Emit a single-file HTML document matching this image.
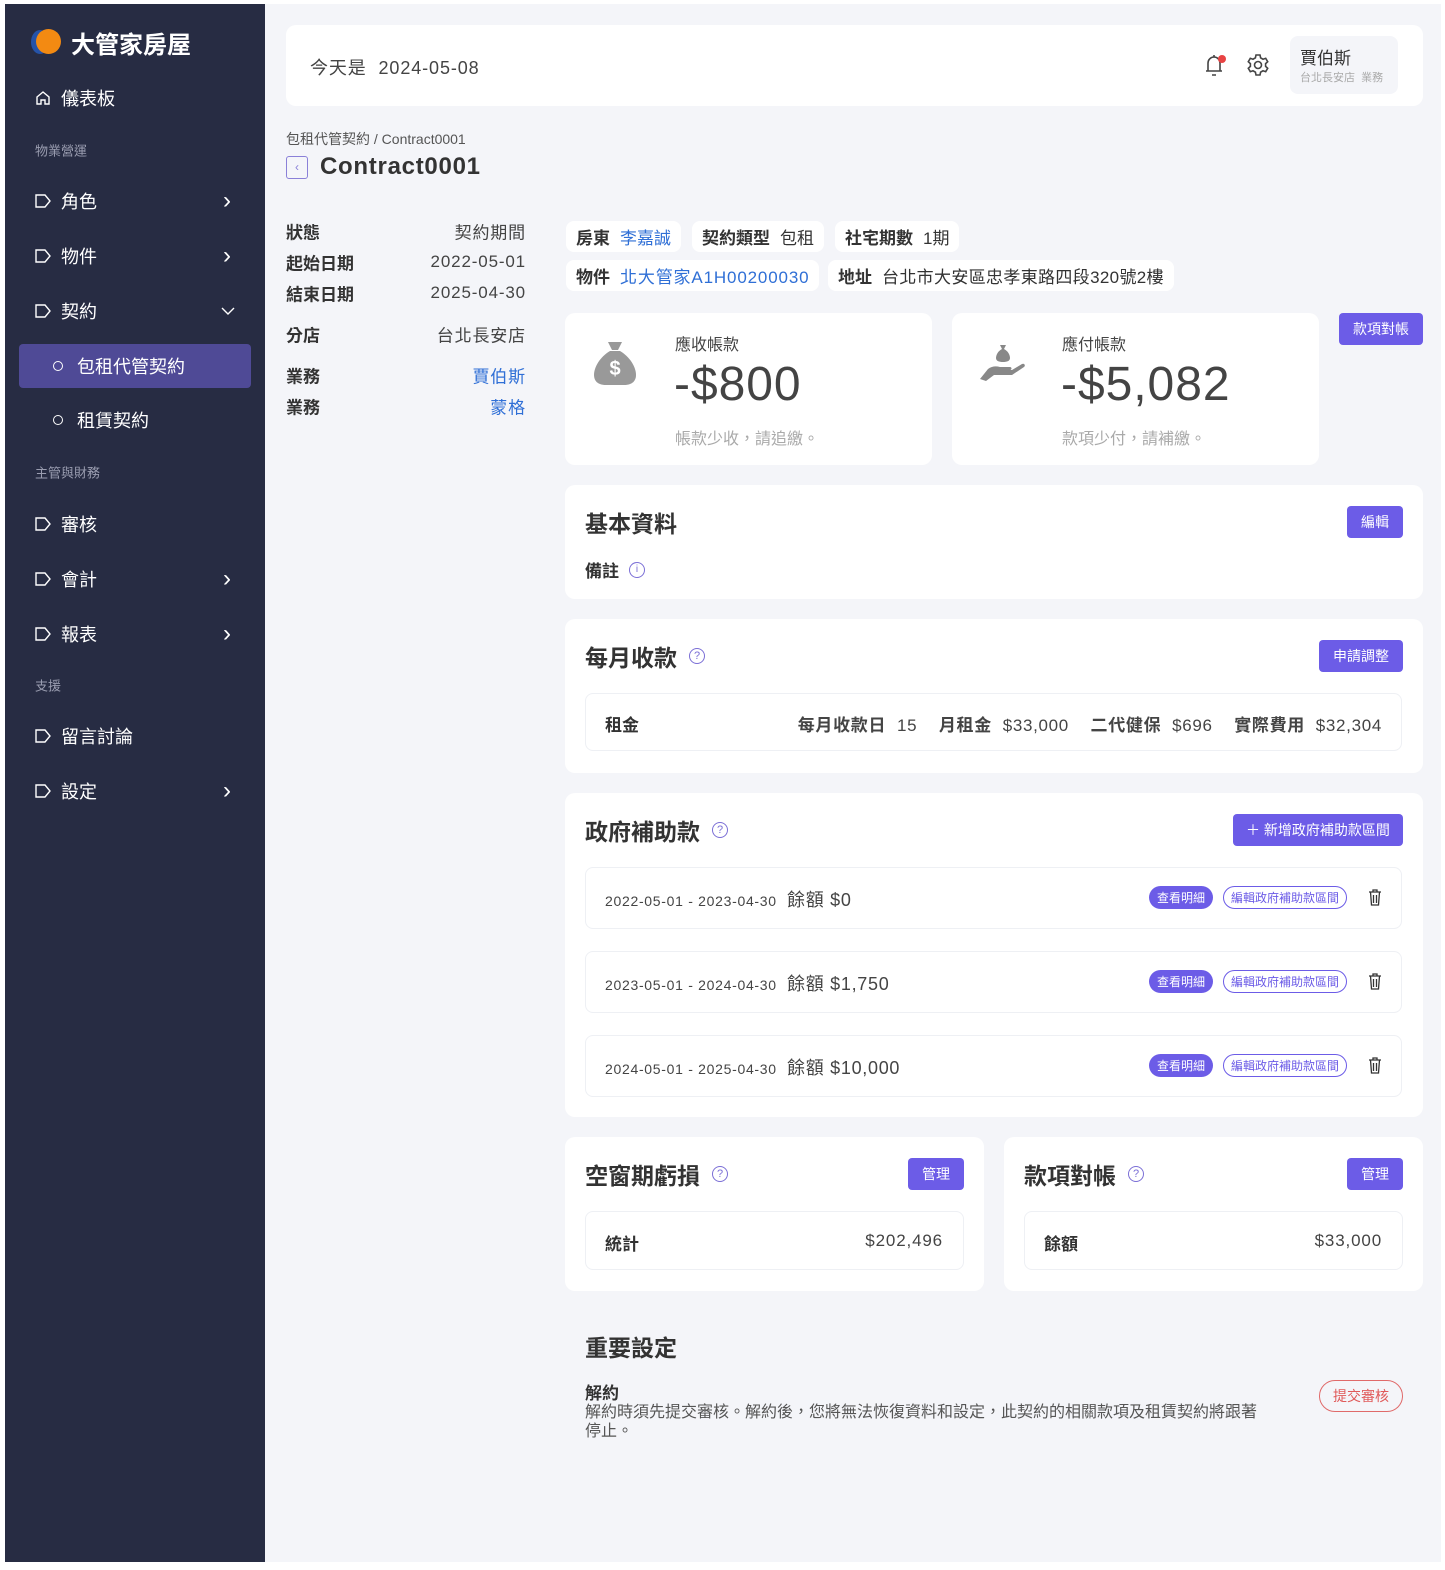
<!DOCTYPE html>
<html><head><meta charset="utf-8"><style>
*{margin:0;padding:0;box-sizing:border-box}
body{width:1445px;height:1570px;background:#fff;font-family:"Liberation Sans","Noto Sans CJK TC",sans-serif;color:#333;position:relative;overflow:hidden}
.a{position:absolute}
.ls{letter-spacing:0.05em}
.main{left:5px;top:4px;width:1436px;height:1558px;background:#f4f5f9}
.side{left:5px;top:4px;width:260px;height:1558px;background:#272c43;color:#fff}
.ni{position:absolute;left:30px;font-size:18px;display:flex;align-items:center;gap:10px;transform:translateY(-50%)}
.sec{position:absolute;left:30px;font-size:13px;color:#9a9db0;transform:translateY(-50%)}
.chev{position:absolute;left:218px;transform:translateY(-50%);font-size:24px;color:#fff}
.card{position:absolute;background:#fff;border-radius:10px}
.lab{position:absolute;left:286px;font-size:17px;font-weight:bold;transform:translateY(-50%)}
.val{position:absolute;right:919px;font-size:17px;color:#444;transform:translateY(-50%);letter-spacing:0.05em}
.chip{position:absolute;background:#fff;border-radius:8px;height:31px;font-size:17px;display:flex;align-items:center;padding:0 10px;gap:10px;white-space:nowrap}
.chip b{color:#333}
.blue{color:#2f6fd6}
.btn{position:absolute;background:#6c5ce7;color:#fff;border-radius:4px;font-size:14px;display:flex;align-items:center;justify-content:center}
.h2{position:absolute;font-size:23px;font-weight:bold;color:#333;display:flex;align-items:center;gap:12px}
.q{width:16px;height:16px;border:1.3px solid #7b6fd6;border-radius:50%;color:#7b6fd6;font-size:11px;display:flex;align-items:center;justify-content:center;font-weight:normal}
.row{position:absolute;left:585px;width:817px;border:1px solid #eef0f4;border-radius:8px;background:#fff}
.pill1{position:absolute;background:#6c5ce7;color:#fff;border-radius:12px;font-size:12px;height:23px;width:64px;display:flex;align-items:center;justify-content:center}
.pill2{position:absolute;border:1.3px solid #6c5ce7;color:#6c5ce7;border-radius:12px;font-size:12px;height:23px;width:124px;display:flex;align-items:center;justify-content:center}
</style></head><body>
<div class="a main"></div>
<div class="a side">
 <div class="a" style="left:26px;top:24px;width:30px;height:28px">
  <div class="a" style="left:0;top:2px;width:18px;height:24px;border-radius:50%;background:#2553a8"></div>
  <div class="a" style="left:5px;top:1px;width:25px;height:25px;border-radius:50%;background:#f38a12"></div>
 </div>
 <div class="a" style="left:66px;top:21px;font-size:24px;font-weight:bold">大管家房屋</div>
 <div class="ni" style="top:94px"><svg width="16" height="16" viewBox="0 0 16 16" fill="none" stroke="#fff" stroke-width="1.4"><path d="M2 7L8 2l6 5v7H10v-4H6v4H2z"/></svg>儀表板</div>
 <div class="sec" style="top:146px">物業營運</div>
 <div class="ni" style="top:197px"><svg width="16" height="14" viewBox="0 0 16 14" fill="none" stroke="#fff" stroke-width="1.4"><path d="M1 1h9l5 6-5 6H1z"/></svg>角色</div><div class="chev" style="top:197px">›</div>
 <div class="ni" style="top:252px"><svg width="16" height="14" viewBox="0 0 16 14" fill="none" stroke="#fff" stroke-width="1.4"><path d="M1 1h9l5 6-5 6H1z"/></svg>物件</div><div class="chev" style="top:252px">›</div>
 <div class="ni" style="top:307px"><svg width="16" height="14" viewBox="0 0 16 14" fill="none" stroke="#fff" stroke-width="1.4"><path d="M1 1h9l5 6-5 6H1z"/></svg>契約</div>
 <svg class="a" style="left:216px;top:303px" width="14" height="9" viewBox="0 0 14 9" fill="none" stroke="#fff" stroke-width="1.4"><path d="M1 1l6 6 6-6"/></svg>
 <div class="a" style="left:14px;top:340px;width:232px;height:44px;background:#4f4a96;border-radius:4px"></div>
 <div class="ni" style="top:362px;left:48px;gap:14px"><span style="width:10px;height:10px;border:1.3px solid #fff;border-radius:50%"></span>包租代管契約</div>
 <div class="ni" style="top:416px;left:48px;gap:14px"><span style="width:10px;height:10px;border:1.3px solid #fff;border-radius:50%"></span>租賃契約</div>
 <div class="sec" style="top:468px">主管與財務</div>
 <div class="ni" style="top:520px"><svg width="16" height="14" viewBox="0 0 16 14" fill="none" stroke="#fff" stroke-width="1.4"><path d="M1 1h9l5 6-5 6H1z"/></svg>審核</div>
 <div class="ni" style="top:575px"><svg width="16" height="14" viewBox="0 0 16 14" fill="none" stroke="#fff" stroke-width="1.4"><path d="M1 1h9l5 6-5 6H1z"/></svg>會計</div><div class="chev" style="top:575px">›</div>
 <div class="ni" style="top:630px"><svg width="16" height="14" viewBox="0 0 16 14" fill="none" stroke="#fff" stroke-width="1.4"><path d="M1 1h9l5 6-5 6H1z"/></svg>報表</div><div class="chev" style="top:630px">›</div>
 <div class="sec" style="top:681px">支援</div>
 <div class="ni" style="top:732px"><svg width="16" height="14" viewBox="0 0 16 14" fill="none" stroke="#fff" stroke-width="1.4"><path d="M1 1h9l5 6-5 6H1z"/></svg>留言討論</div>
 <div class="ni" style="top:787px"><svg width="16" height="14" viewBox="0 0 16 14" fill="none" stroke="#fff" stroke-width="1.4"><path d="M1 1h9l5 6-5 6H1z"/></svg>設定</div><div class="chev" style="top:787px">›</div>
</div>

<div class="card" style="left:286px;top:25px;width:1137px;height:81px"></div>
<div class="a ls" style="left:310px;top:54px;font-size:18px;color:#444">今天是&nbsp; 2024-05-08</div>
<svg class="a" style="left:1202px;top:51px" width="26" height="28" viewBox="0 0 26 28" fill="none" stroke="#444" stroke-width="1.6"><path d="M4 20h16M6 20v-8a6 6 0 0 1 12 0v8M10 24h4M12 4v2"/><circle cx="20" cy="8" r="4" fill="#e84343" stroke="none"/></svg>
<svg class="a" style="left:1246px;top:53px" width="24" height="24" viewBox="0 0 24 24" fill="none" stroke="#444" stroke-width="1.6"><circle cx="12" cy="12" r="3.5"/><path d="M10 2h4l.6 2.8 2.4 1.4 2.7-.9 2 3.4-2.1 1.9v2.8l2.1 1.9-2 3.4-2.7-.9-2.4 1.4L14 22h-4l-.6-2.8-2.4-1.4-2.7.9-2-3.4 2.1-1.9v-2.8L2.3 8.7l2-3.4 2.7.9 2.4-1.4z"/></svg>
<div class="a" style="left:1290px;top:36px;width:108px;height:58px;background:#f4f5f9;border-radius:8px"></div>
<div class="a" style="left:1300px;top:44px;font-size:17px;color:#333">賈伯斯</div>
<div class="a" style="left:1300px;top:69px;font-size:11px;color:#aaa">台北長安店&nbsp; 業務</div>

<div class="a" style="left:286px;top:129px;font-size:14px;color:#555">包租代管契約 / Contract0001</div>
<div class="a" style="left:286px;top:156px;width:22px;height:23px;border:1.3px solid #8a80d8;border-radius:3px;color:#8a80d8;font-size:12px;text-align:center;line-height:20px">‹</div>
<div class="a" style="left:320px;top:153px;font-size:24px;font-weight:bold;color:#333;letter-spacing:0.03em">Contract0001</div>

<div class="lab" style="top:231px">狀態</div><div class="val" style="top:231px">契約期間</div>
<div class="lab" style="top:262px">起始日期</div><div class="val" style="top:262px">2022-05-01</div>
<div class="lab" style="top:293px">結束日期</div><div class="val" style="top:293px">2025-04-30</div>
<div class="lab" style="top:334px">分店</div><div class="val" style="top:334px">台北長安店</div>
<div class="lab" style="top:375px">業務</div><div class="val blue" style="top:375px">賈伯斯</div>
<div class="lab" style="top:406px">業務</div><div class="val blue" style="top:406px">蒙格</div>

<div class="chip" style="left:566px;top:221px"><b>房東</b><span class="blue">李嘉誠</span></div>
<div class="chip" style="left:692px;top:221px"><b>契約類型</b><span>包租</span></div>
<div class="chip" style="left:835px;top:221px"><b>社宅期數</b><span>1期</span></div>
<div class="chip" style="left:566px;top:260px"><b>物件</b><span class="blue ls">北大管家A1H00200030</span></div>
<div class="chip" style="left:828px;top:260px"><b>地址</b><span style="letter-spacing:0.02em">台北市大安區忠孝東路四段320號2樓</span></div>

<div class="card" style="left:565px;top:313px;width:367px;height:152px"></div>
<svg class="a" style="left:590px;top:338px" width="50" height="50" viewBox="0 0 50 50"><path d="M18 4h14l-4 8h-6z" fill="#999"/><path d="M20 13h10c10 6 16 16 16 24 0 7-5 10-12 10H16C9 47 4 44 4 37c0-8 6-18 16-24z" fill="#999"/><text x="25" y="37" font-size="20" font-weight="bold" fill="#fff" text-anchor="middle" font-family="Liberation Sans">$</text></svg>
<div class="a" style="left:675px;top:331px;font-size:16px;color:#444">應收帳款</div>
<div class="a" style="left:674px;top:357px;font-size:48px;color:#444;letter-spacing:0.02em">-$800</div>
<div class="a" style="left:675px;top:425px;font-size:16px;color:#aaa">帳款少收，請追繳。</div>
<div class="card" style="left:952px;top:313px;width:367px;height:152px"></div>
<svg class="a" style="left:978px;top:343px" width="48" height="44" viewBox="0 0 48 44"><path d="M22 2h6l-2 4c4 2 6 6 6 9 0 3-3 4-7 4s-7-1-7-4c0-3 2-7 6-9z" fill="#888"/><path d="M2 36l8-10c4-3 8-3 12-2h10c2 0 2 3 0 3h-9 11l10-6c2-1 4 1 2 3l-12 8H16l-8 6z" fill="#888"/></svg>
<div class="a" style="left:1062px;top:331px;font-size:16px;color:#444">應付帳款</div>
<div class="a" style="left:1061px;top:357px;font-size:48px;color:#444;letter-spacing:0.02em">-$5,082</div>
<div class="a" style="left:1062px;top:425px;font-size:16px;color:#aaa">款項少付，請補繳。</div>
<div class="btn" style="left:1339px;top:313px;width:84px;height:32px">款項對帳</div>

<div class="card" style="left:565px;top:485px;width:858px;height:114px"></div>
<div class="h2" style="left:585px;top:505px">基本資料</div>
<div class="btn" style="left:1347px;top:506px;width:56px;height:32px">編輯</div>
<div class="a" style="left:585px;top:557px;font-size:17px;font-weight:bold;display:flex;align-items:center;gap:10px">備註<span class="q" style="font-size:10px">i</span></div>

<div class="card" style="left:565px;top:619px;width:858px;height:154px"></div>
<div class="h2" style="left:585px;top:639px">每月收款<span class="q">?</span></div>
<div class="btn" style="left:1319px;top:640px;width:84px;height:32px">申請調整</div>
<div class="row" style="top:693px;height:58px"></div>
<div class="a" style="left:605px;top:711px;font-size:17px;font-weight:bold">租金</div>
<div class="a" style="right:63px;top:711px;font-size:17px;color:#444;white-space:nowrap;letter-spacing:0.04em"><b>每月收款日</b>&nbsp; 15&nbsp;&nbsp;&nbsp; <b>月租金</b>&nbsp; $33,000&nbsp;&nbsp;&nbsp; <b>二代健保</b>&nbsp; $696&nbsp;&nbsp;&nbsp; <b>實際費用</b>&nbsp; $32,304</div>

<div class="card" style="left:565px;top:793px;width:858px;height:324px"></div>
<div class="h2" style="left:585px;top:813px">政府補助款<span class="q">?</span></div>
<div class="btn" style="left:1233px;top:814px;width:170px;height:32px">＋ 新增政府補助款區間</div>

<div class="row" style="top:867px;height:62px"></div>
<div class="a ls" style="left:605px;top:886px;font-size:14px;color:#444">2022-05-01 - 2023-04-30 <span style="font-size:18px">&nbsp;餘額&nbsp;$0</span></div>
<div class="pill1" style="left:1149px;top:886px">查看明細</div><div class="pill2" style="left:1223px;top:886px">編輯政府補助款區間</div>
<div class="row" style="top:951px;height:62px"></div>
<div class="a ls" style="left:605px;top:970px;font-size:14px;color:#444">2023-05-01 - 2024-04-30 <span style="font-size:18px">&nbsp;餘額&nbsp;$1,750</span></div>
<div class="pill1" style="left:1149px;top:970px">查看明細</div><div class="pill2" style="left:1223px;top:970px">編輯政府補助款區間</div>
<div class="row" style="top:1035px;height:62px"></div>
<div class="a ls" style="left:605px;top:1054px;font-size:14px;color:#444">2024-05-01 - 2025-04-30 <span style="font-size:18px">&nbsp;餘額&nbsp;$10,000</span></div>
<div class="pill1" style="left:1149px;top:1054px">查看明細</div><div class="pill2" style="left:1223px;top:1054px">編輯政府補助款區間</div>
<svg class="a" style="left:1368px;top:889px" width="14" height="17" viewBox="0 0 14 17" fill="none" stroke="#333" stroke-width="1.3"><path d="M1 3h12M5 3V1h4v2M2.5 3l1 13h7l1-13M5.5 6v8M8.5 6v8"/></svg>
<svg class="a" style="left:1368px;top:973px" width="14" height="17" viewBox="0 0 14 17" fill="none" stroke="#333" stroke-width="1.3"><path d="M1 3h12M5 3V1h4v2M2.5 3l1 13h7l1-13M5.5 6v8M8.5 6v8"/></svg>
<svg class="a" style="left:1368px;top:1057px" width="14" height="17" viewBox="0 0 14 17" fill="none" stroke="#333" stroke-width="1.3"><path d="M1 3h12M5 3V1h4v2M2.5 3l1 13h7l1-13M5.5 6v8M8.5 6v8"/></svg>

<div class="card" style="left:565px;top:1137px;width:419px;height:154px"></div>
<div class="h2" style="left:585px;top:1157px">空窗期虧損<span class="q">?</span></div>
<div class="btn" style="left:908px;top:1158px;width:56px;height:32px">管理</div>
<div class="row" style="top:1211px;height:59px;width:379px"></div>
<div class="a" style="left:605px;top:1230px;font-size:17px;font-weight:bold">統計</div>
<div class="a ls" style="right:502px;top:1231px;font-size:17px;color:#444">$202,496</div>

<div class="card" style="left:1004px;top:1137px;width:419px;height:154px"></div>
<div class="h2" style="left:1024px;top:1157px">款項對帳<span class="q">?</span></div>
<div class="btn" style="left:1347px;top:1158px;width:56px;height:32px">管理</div>
<div class="row" style="left:1024px;top:1211px;height:59px;width:379px"></div>
<div class="a" style="left:1044px;top:1230px;font-size:17px;font-weight:bold">餘額</div>
<div class="a ls" style="right:63px;top:1231px;font-size:17px;color:#444">$33,000</div>

<div class="h2" style="left:585px;top:1329px">重要設定</div>
<div class="a" style="left:585px;top:1379px;font-size:17px;font-weight:bold">解約</div>
<div class="a" style="left:585px;top:1403px;width:680px;font-size:16px;color:#555;line-height:19px">解約時須先提交審核。解約後，您將無法恢復資料和設定，此契約的相關款項及租賃契約將跟著停止。</div>
<div class="a" style="left:1319px;top:1380px;width:84px;height:32px;border:1.3px solid #e06a6a;color:#e05a5a;border-radius:16px;font-size:14px;display:flex;align-items:center;justify-content:center">提交審核</div>
</body></html>
